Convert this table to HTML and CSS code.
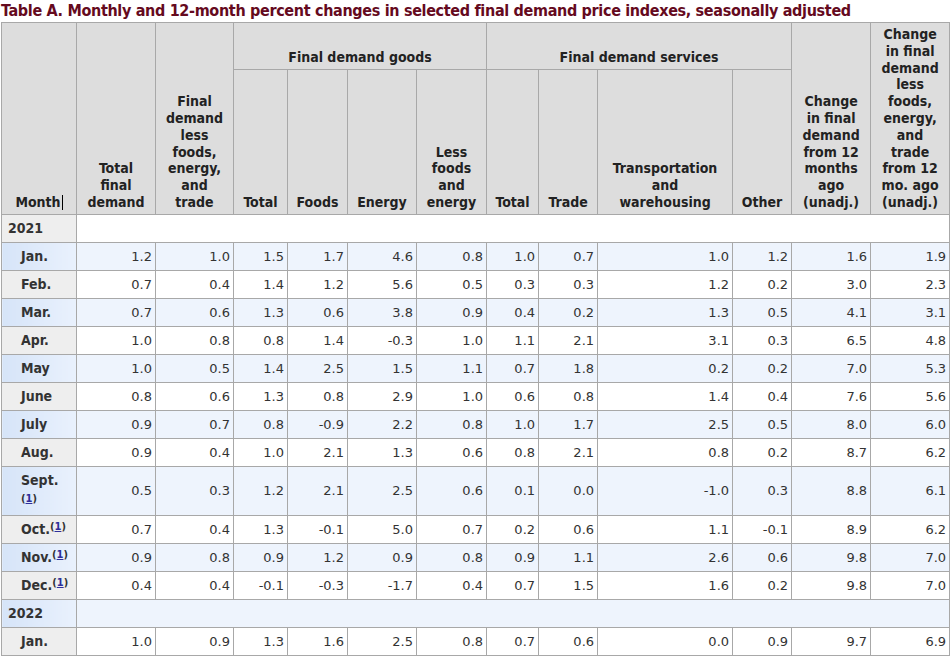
FILE: index.html
```html
<!DOCTYPE html>
<html>
<head>
<meta charset="utf-8">
<link rel="stylesheet" href="styles.css">
</head>
<body>
<div class="wrap">
<div class="title">Table A. Monthly and 12-month percent changes in selected final demand price indexes, seasonally adjusted</div>
<table class="ppi">
<colgroup>
<col style="width:75px"><col style="width:79px"><col style="width:78px"><col style="width:54px"><col style="width:60px"><col style="width:69px"><col style="width:70px"><col style="width:52px"><col style="width:59px"><col style="width:135px"><col style="width:59px"><col style="width:79px"><col style="width:79px">
</colgroup>
<thead>
<tr class="h1">
<th rowspan="2">Month<span class="caret"></span></th>
<th rowspan="2">Total<br>final<br>demand</th>
<th rowspan="2">Final<br>demand<br>less<br>foods,<br>energy,<br>and<br>trade</th>
<th colspan="4">Final demand goods</th>
<th colspan="4">Final demand services</th>
<th rowspan="2">Change<br>in final<br>demand<br>from 12<br>months<br>ago<br>(unadj.)</th>
<th rowspan="2">Change<br>in final<br>demand<br>less<br>foods,<br>energy,<br>and<br>trade<br>from 12<br>mo. ago<br>(unadj.)</th>
</tr>
<tr class="h2">
<th>Total</th>
<th>Foods</th>
<th>Energy</th>
<th>Less<br>foods<br>and<br>energy</th>
<th>Total</th>
<th>Trade</th>
<th>Transportation<br>and<br>warehousing</th>
<th>Other</th>
</tr>
</thead>
<tbody>
<tr class="yr"><th>2021</th><td colspan="12"></td></tr>
<tr class="alt"><th class="m">Jan.</th><td>1.2</td><td>1.0</td><td>1.5</td><td>1.7</td><td>4.6</td><td>0.8</td><td>1.0</td><td>0.7</td><td>1.0</td><td>1.2</td><td>1.6</td><td>1.9</td></tr>
<tr><th class="m">Feb.</th><td>0.7</td><td>0.4</td><td>1.4</td><td>1.2</td><td>5.6</td><td>0.5</td><td>0.3</td><td>0.3</td><td>1.2</td><td>0.2</td><td>3.0</td><td>2.3</td></tr>
<tr class="alt"><th class="m">Mar.</th><td>0.7</td><td>0.6</td><td>1.3</td><td>0.6</td><td>3.8</td><td>0.9</td><td>0.4</td><td>0.2</td><td>1.3</td><td>0.5</td><td>4.1</td><td>3.1</td></tr>
<tr><th class="m">Apr.</th><td>1.0</td><td>0.8</td><td>0.8</td><td>1.4</td><td>-0.3</td><td>1.0</td><td>1.1</td><td>2.1</td><td>3.1</td><td>0.3</td><td>6.5</td><td>4.8</td></tr>
<tr class="alt"><th class="m">May</th><td>1.0</td><td>0.5</td><td>1.4</td><td>2.5</td><td>1.5</td><td>1.1</td><td>0.7</td><td>1.8</td><td>0.2</td><td>0.2</td><td>7.0</td><td>5.3</td></tr>
<tr><th class="m">June</th><td>0.8</td><td>0.6</td><td>1.3</td><td>0.8</td><td>2.9</td><td>1.0</td><td>0.6</td><td>0.8</td><td>1.4</td><td>0.4</td><td>7.6</td><td>5.6</td></tr>
<tr class="alt"><th class="m">July</th><td>0.9</td><td>0.7</td><td>0.8</td><td>-0.9</td><td>2.2</td><td>0.8</td><td>1.0</td><td>1.7</td><td>2.5</td><td>0.5</td><td>8.0</td><td>6.0</td></tr>
<tr><th class="m">Aug.</th><td>0.9</td><td>0.4</td><td>1.0</td><td>2.1</td><td>1.3</td><td>0.6</td><td>0.8</td><td>2.1</td><td>0.8</td><td>0.2</td><td>8.7</td><td>6.2</td></tr>
<tr class="alt"><th class="m tall">Sept.<br><span class="fn">(<a href="#n1">1</a>)</span></th><td>0.5</td><td>0.3</td><td>1.2</td><td>2.1</td><td>2.5</td><td>0.6</td><td>0.1</td><td>0.0</td><td>-1.0</td><td>0.3</td><td>8.8</td><td>6.1</td></tr>
<tr><th class="m">Oct.<sup class="fn">(<a href="#n1">1</a>)</sup></th><td>0.7</td><td>0.4</td><td>1.3</td><td>-0.1</td><td>5.0</td><td>0.7</td><td>0.2</td><td>0.6</td><td>1.1</td><td>-0.1</td><td>8.9</td><td>6.2</td></tr>
<tr class="alt"><th class="m">Nov.<sup class="fn">(<a href="#n1">1</a>)</sup></th><td>0.9</td><td>0.8</td><td>0.9</td><td>1.2</td><td>0.9</td><td>0.8</td><td>0.9</td><td>1.1</td><td>2.6</td><td>0.6</td><td>9.8</td><td>7.0</td></tr>
<tr><th class="m">Dec.<sup class="fn">(<a href="#n1">1</a>)</sup></th><td>0.4</td><td>0.4</td><td>-0.1</td><td>-0.3</td><td>-1.7</td><td>0.4</td><td>0.7</td><td>1.5</td><td>1.6</td><td>0.2</td><td>9.8</td><td>7.0</td></tr>
<tr class="yr alt"><th>2022</th><td colspan="12"></td></tr>
<tr><th class="m">Jan.</th><td>1.0</td><td>0.9</td><td>1.3</td><td>1.6</td><td>2.5</td><td>0.8</td><td>0.7</td><td>0.6</td><td>0.0</td><td>0.9</td><td>9.7</td><td>6.9</td></tr>
</tbody>
</table>
</div>
</body>
</html>
```

FILE: styles.css
```css
html, body {
  margin: 0;
  padding: 0;
  background: #ffffff;
}

body {
  font-family: "DejaVu Sans Condensed", "DejaVu Sans", sans-serif;
  color: #333333;
}

.wrap {
  padding-left: 1px;
}

.title {
  font-size: 16px;
  font-weight: bold;
  color: #650a1e;
  line-height: 22px;
  height: 22px;
  letter-spacing: -0.33px;
  white-space: nowrap;
}

.ppi {
  border-collapse: collapse;
  table-layout: fixed;
  width: 949px;
}

.ppi th,
.ppi td {
  border: 1px solid #a8a8a8;
}

.ppi thead th {
  background: #dddddd;
  color: #222222;
  font-size: 14px;
  font-weight: bold;
  line-height: 16.8px;
  vertical-align: bottom;
  text-align: center;
  padding: 3px 1px;
}

.h1 {
  height: 47px;
}

.caret {
  display: inline-block;
  width: 1px;
  height: 15px;
  background: #000000;
  vertical-align: -3px;
  margin-left: 1px;
}

.ppi tbody th,
.ppi tbody td {
  line-height: 17px;
  padding: 5px 3px;
  vertical-align: middle;
}

.ppi tbody td {
  font-family: "DejaVu Sans", sans-serif;
  font-size: 13px;
  text-align: right;
  background: #ffffff;
  color: #333333;
}

.ppi tbody th {
  font-size: 14px;
  text-align: left;
  font-weight: bold;
  color: #333333;
  background: #eeeeee;
}

.ppi tbody th.m {
  padding-left: 19px;
}

.ppi tbody th.tall {
  padding-bottom: 8px;
}

.ppi tbody .yr th {
  padding-left: 6px;
}

.ppi tbody tr.alt td {
  background: #eef4fd;
}

.ppi tbody tr.alt th {
  background: linear-gradient(to right, #d6e4f8, #e9f1fd);
}

.fn {
  font-size: 11px;
  font-weight: bold;
  color: #333333;
}

sup.fn {
  line-height: 0;
  vertical-align: 4px;
}

.fn a {
  color: #2e2e9a;
  text-decoration: underline;
}
```
